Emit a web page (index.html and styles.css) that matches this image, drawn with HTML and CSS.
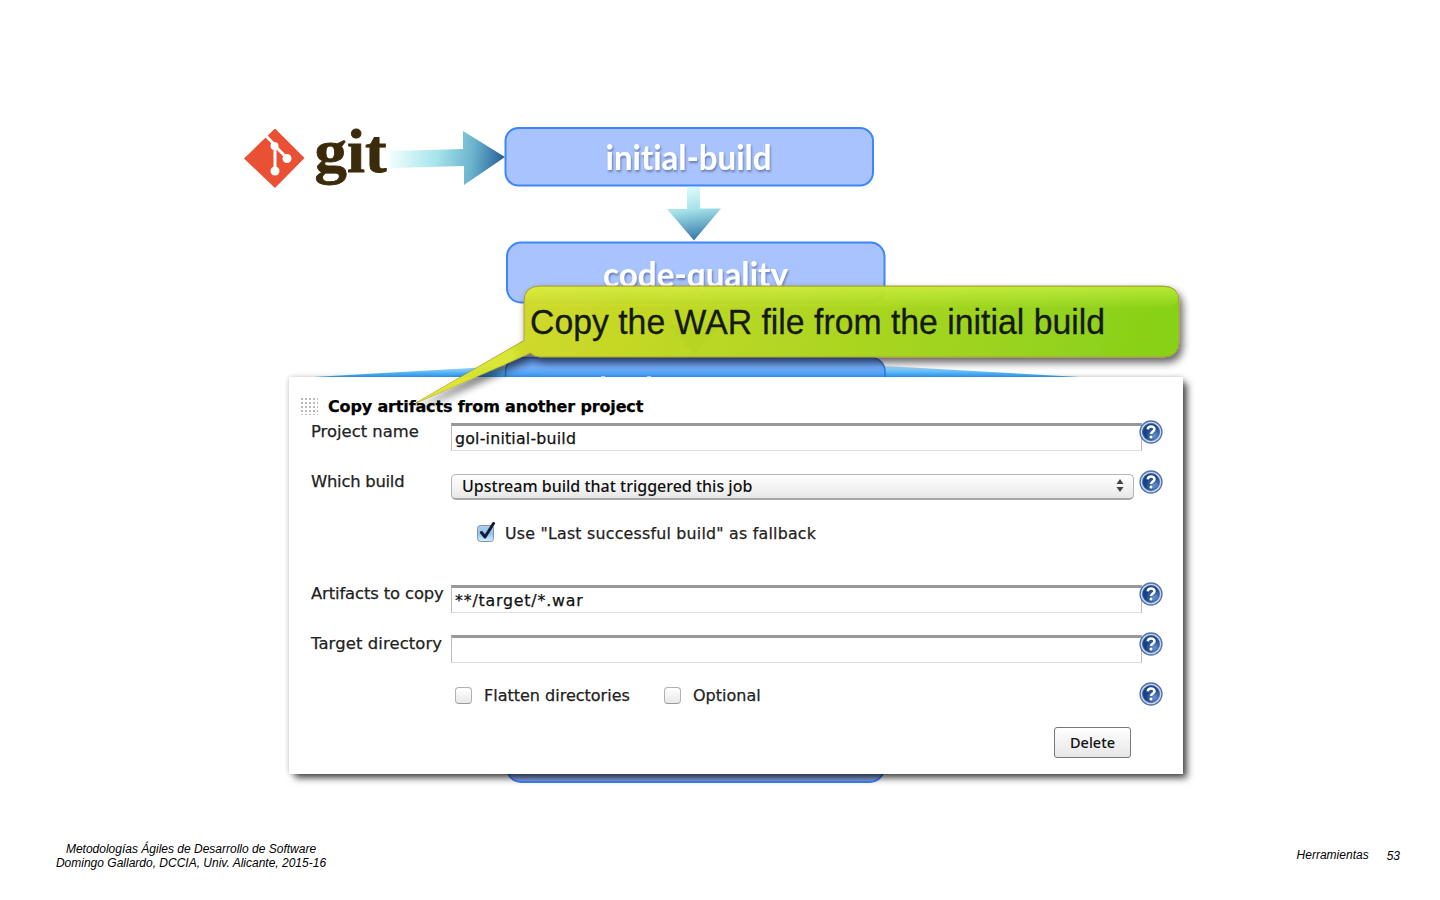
FILE: index.html
```html
<!DOCTYPE html>
<html lang="es">
<head>
<meta charset="utf-8">
<title>Herramientas</title>
<link rel="stylesheet" href="styles.css">
</head>
<body>
<main class="slide">
  <svg class="layer" viewBox="0 0 1440 900">
    <defs>
      <linearGradient id="ga" gradientUnits="userSpaceOnUse" x1="390" y1="150" x2="504" y2="165"><stop offset="0" stop-color="#f0fffe"/><stop offset=".4" stop-color="#a9e5ec"/><stop offset=".72" stop-color="#6bb3cd"/><stop offset="1" stop-color="#235f98"/></linearGradient>
      <linearGradient id="gd" gradientUnits="userSpaceOnUse" x1="690" y1="187" x2="698" y2="243"><stop offset="0" stop-color="#defcfc"/><stop offset=".4" stop-color="#a5e2e9"/><stop offset="1" stop-color="#286da3"/></linearGradient>
      <linearGradient id="gw" x1="0" y1="0" x2="0" y2="1"><stop offset="0" stop-color="#b4dcf6"/><stop offset=".6" stop-color="#4fb3fa"/><stop offset="1" stop-color="#2f9dfb"/></linearGradient>
      <linearGradient id="gb" gradientUnits="userSpaceOnUse" x1="0" y1="357" x2="0" y2="378"><stop offset="0" stop-color="#5f92ec"/><stop offset=".5" stop-color="#74acf8"/><stop offset="1" stop-color="#35a0fd"/></linearGradient>
      <filter id="ts" x="-10%" y="-30%" width="120%" height="170%"><feDropShadow dx="1" dy="2" stdDeviation="1.3" flood-color="#405080" flood-opacity=".6"/></filter>
    </defs>
    <path d="M275 128.500 304.500 158 275 188 244 158.500Z" fill="#ea5034"/>
    <path d="M266 136 275 145V171M275 146 287 158" fill="none" stroke="#fff" stroke-width="3"/>
    <g fill="#fff"><circle cx="274.500" cy="146" r="4"/><circle cx="275" cy="171" r="4.500"/><circle cx="287" cy="158.500" r="4.500"/></g>
    <text class="git" x="314.500" y="172" textLength="72" lengthAdjust="spacingAndGlyphs">git</text>
    <path d="M390 151 463 149V131L505 157 464 185V166L390 168Z" fill="url(#ga)"/>
    <rect class="stage" x="505.500" y="128" width="367.500" height="57.500" rx="13"/>
    <text class="stage-name" x="605.500" y="169.500" textLength="166" lengthAdjust="spacingAndGlyphs" filter="url(#ts)">initial-build</text>
    <path d="M687 187H700V208.500H721L694 240.500 667 209H687Z" fill="url(#gd)"/>
    <rect class="stage" x="507" y="242.500" width="377.500" height="60" rx="14"/>
    <text class="stage-name" x="603" y="286.500" textLength="185" lengthAdjust="spacingAndGlyphs" filter="url(#ts)">code-quality</text>
    <path d="M667 325H721L694 354.500Z" fill="#286da3" opacity=".55"/>
    <path d="M296 378 506 366H885L1098 378Z" fill="url(#gw)"/>
    <rect x="505.500" y="357.500" width="379.500" height="60" rx="14" fill="url(#gb)" stroke="#3675df" stroke-width="1.500"/>
    <path d="M601 376h4v2h-4zM647 376h4v2h-4z" fill="#d7edff"/>
    <rect class="last" x="507" y="722" width="377" height="60" rx="14"/>
  </svg>

  <section class="panel">
    <h1 class="title"><svg width="17" height="17"><defs><pattern id="dots" width="4" height="4" patternUnits="userSpaceOnUse"><rect width="2" height="2" fill="#bbb"/></pattern></defs><rect width="17" height="17" fill="url(#dots)"/></svg><span class="title-text">Copy artifacts from another project</span></h1>
    <div class="row"><span class="label l1">Project name</span><div class="input">gol-initial-build</div><svg class="help" viewBox="0 0 24 24"><use href="#q"/></svg></div>
    <div class="row"><span class="label l2">Which build</span><div class="select"><span>Upstream build that triggered this job</span><svg width="8" height="13"><path d="M.5 5 4 0 7.500 5ZM.5 8 4 13 7.500 8Z" fill="#444"/></svg></div><svg class="help" viewBox="0 0 24 24"><use href="#q"/></svg></div>
    <div class="fallback"><svg width="21" height="22"><defs><linearGradient id="ck" x1="0" y1="0" x2="0" y2="1"><stop stop-color="#b5cde9"/><stop offset=".5" stop-color="#94c2eb"/><stop offset="1" stop-color="#d3f4ff"/></linearGradient></defs><rect x="1.500" y="3.500" width="16" height="16" rx="3" fill="url(#ck)" stroke="#8496ad"/><path d="M5.500 10.500 9 15 17.500 1.500" fill="none" stroke="#101d39" stroke-width="3" stroke-linecap="round" stroke-linejoin="round"/></svg><span>Use "Last successful build" as fallback</span></div>
    <div class="row"><span class="label l3">Artifacts to copy</span><div class="input war">**/target/*.war</div><svg class="help" viewBox="0 0 24 24"><use href="#q"/></svg></div>
    <div class="row"><span class="label l4">Target directory</span><div class="input"></div><svg class="help" viewBox="0 0 24 24"><use href="#q"/></svg></div>
    <div class="options"><i class="box"></i><span class="flatten">Flatten directories</span><i class="box"></i><span class="optional">Optional</span><svg class="help" viewBox="0 0 24 24"><use href="#q"/></svg></div>
    <div class="actions"><div class="button">Delete</div></div>
  </section>

  <svg class="layer" viewBox="0 0 1440 900">
    <defs>
      <linearGradient id="gc" gradientUnits="userSpaceOnUse" x1="520" y1="270" x2="1145" y2="420"><stop offset="0" stop-color="#d0d822"/><stop offset=".45" stop-color="#aed51a"/><stop offset="1" stop-color="#83d010"/></linearGradient>
      <linearGradient id="gl" x1="0" y1="0" x2="0" y2="1"><stop offset="0" stop-color="#e4ff55" stop-opacity=".5"/><stop offset="1" stop-color="#e4ff55" stop-opacity="0"/></linearGradient>
      <linearGradient id="gt" gradientUnits="userSpaceOnUse" x1="524" y1="348" x2="415" y2="403"><stop stop-color="#cfe027" stop-opacity="0"/><stop offset=".12" stop-color="#d7e62d"/><stop offset="1" stop-color="#e0e52b"/></linearGradient>
      <filter id="cs" x="-5%" y="-15%" width="110%" height="140%"><feDropShadow dx="3" dy="5" stdDeviation="4" flood-opacity=".65"/></filter>
      <radialGradient id="hg" cx=".7" cy=".7"><stop stop-color="#6893ce"/><stop offset="1" stop-color="#194286"/></radialGradient>
      <g id="q"><circle cx="12" cy="12" r="11" fill="#c9d8ed" stroke="#5674aa" stroke-width="1.300"/><circle cx="12" cy="12" r="8.500" fill="url(#hg)" stroke="#3c639d" stroke-width=".8"/><path d="M8.700 9.300C9 5.500 15.700 5.700 15.500 9.300 15.400 11.600 12.100 11.300 12.100 14" fill="none" stroke="#fff" stroke-width="2.500"/><circle cx="12" cy="17" r="1.500" fill="#fff"/></g>
    </defs>
    <g filter="url(#cs)" opacity=".96">
      <path d="M540 286H1163Q1179 286 1179 302V341Q1179 357 1163 357H540Q535 357 530.500 353L416 403 524 340.500V302Q524 286 540 286Z" fill="url(#gc)" stroke="#ad9a31"/>
      <path d="M530 353 416 403 524 341Z" fill="url(#gt)"/>
    </g>
    <rect x="525" y="287" width="653" height="22" rx="14" fill="url(#gl)"/>
    <text class="callout" x="530" y="333.500" textLength="575" lengthAdjust="spacingAndGlyphs">Copy the WAR file from the initial build</text>
  </svg>

  <footer class="footer"><div class="credits"><span>Metodologías Ágiles de Desarrollo de Software</span><br><span>Domingo Gallardo, DCCIA, Univ. Alicante, 2015-16</span></div><div class="section"><span>Herramientas</span><span class="page">53</span></div></footer>
</main>
</body>
</html>
```
FILE: styles.css
```css
* { box-sizing: border-box; }
body { margin: 0; background: #fff; }
.slide { position: relative; width: 1440px; height: 900px; overflow: hidden; padding-top: 377px; }
.layer { position: absolute; left: 0; top: 0; width: 1440px; height: 900px; pointer-events: none; }
.git { font: bold 61px "Liberation Serif", serif; fill: #3b2b0b; stroke: #3b2b0b; stroke-width: .8px; }
.stage { fill: #a8c3fd; stroke: #3d86fa; stroke-width: 2px; }
.last { fill: #8aa6e8; stroke: #3d86fa; stroke-width: 2px; }
.stage-name { font: bold 35px Lato, sans-serif; font-variant-ligatures: none; fill: #fff; }
.callout { font: 34.5px "Liberation Sans", sans-serif; fill: #151a10; stroke: #151a10; stroke-width: .3px; }
.panel { position: relative; margin-left: 289px; width: 894px; height: 397px; padding: 18px 0 0 22px; background: #fff; box-shadow: 5px 5px 7px -1px rgba(0,0,0,.7), 0 0 5px rgba(0,0,0,.22); font: 16.4px/20px "DejaVu Sans", sans-serif; color: #222; white-space: nowrap; -webkit-text-stroke: .25px; }
.title { display: flex; height: 27px; margin: 0 0 0 -10px; gap: 10px; font-size: 16px; line-height: 24px; color: #000; }
.title svg { margin-top: 3px; }
.title-text { letter-spacing: -.15px; }
.row { display: flex; height: 50px; align-items: flex-start; }
.label { width: 140px; flex: none; }
.l2 { letter-spacing: -.25px; }
.l3 { letter-spacing: -.12px; }
.l4 { letter-spacing: .12px; }
.input { width: 691px; height: 28px; flex: none; margin-top: 1px; padding: 3px 4px 4px 3px; border: 1px solid #bbb; border-top: 3px solid #989898; border-bottom-color: #ddd; color: #111; line-height: 19px; font-size: 15.8px; letter-spacing: .2px; }
.war { letter-spacing: .8px; }
.help { width: 24px; height: 24px; flex: none; margin: -2px 0 0 -3px; position: relative; }
.select { display: flex; justify-content: space-between; align-items: center; width: 683px; height: 26px; flex: none; margin: 2px 8px 0 0; padding: 0 9px 2px 10px; border: 1px solid #b4b4b4; border-bottom: 2px solid #a6a6a6; border-radius: 5px; background: linear-gradient(#fff, #f4f4f4 50%, #e7e7e7); font: 500 16px/20px "Noto Sans", sans-serif; color: #111; -webkit-text-stroke: 0; }
.fallback { display: flex; height: 62px; padding-left: 165px; gap: 8px; font-size: 15.8px; line-height: 24px; letter-spacing: .23px; }
.options { display: flex; height: 43px; padding-left: 144px; line-height: 24px; }
.box { width: 17px; height: 17px; flex: none; margin: 3px 12px 0 0; border: 1px solid #b0b0b0; border-bottom-color: #999; border-radius: 4px; background: linear-gradient(#fff, #e8e8e8); }
.flatten { width: 180px; font-size: 16px; }
.optional { width: 449px; font-size: 16px; }
.actions { padding-left: 743px; }
.button { width: 77px; height: 31px; border: 1.5px solid #777; border-radius: 3px; background: linear-gradient(#fff, #e6e6e6); text-align: center; font: 500 14.5px/28px "Noto Sans", sans-serif; color: #111; -webkit-text-stroke: 0; }
.footer { display: flex; justify-content: space-between; padding: 68px 40px 0 55px; font: italic 12px/14px "Liberation Sans", sans-serif; color: #000; }
.credits { width: 272px; text-align: center; white-space: nowrap; }
.section { display: flex; gap: 18px; margin-top: 6px; }
.page { margin-top: 1px; }
```
